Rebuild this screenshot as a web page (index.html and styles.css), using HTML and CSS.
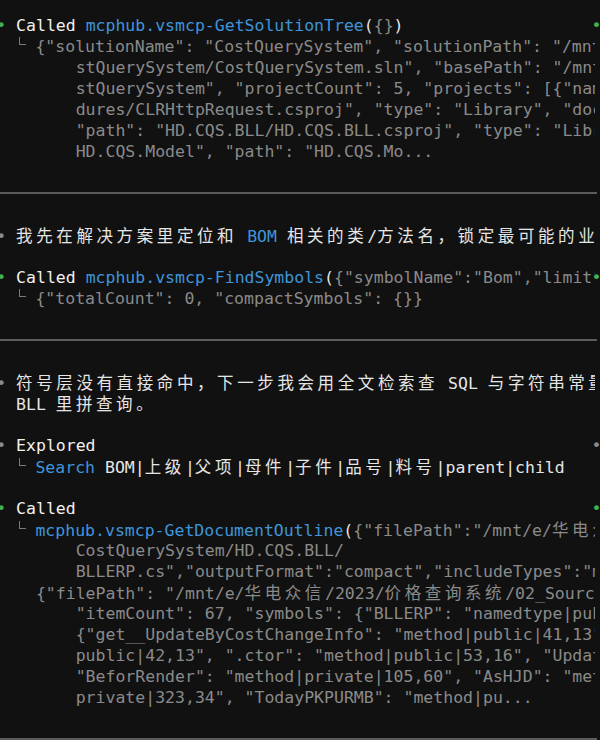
FILE: index.html
```html
<!DOCTYPE html>
<html lang="zh-CN">
<head>
<meta charset="utf-8">
<title>Terminal</title>
<link rel="stylesheet" href="styles.css">
</head>
<body>
<div class="term">
<div class="row"><div class="l"><span class="dot-g">•</span> <span class="hd">Called</span> <span class="b">mcphub.vsmcp-GetSolutionTree</span>(<span class="g">{}</span>)</div><span class="rdot dot-g">•</span></div>
<div class="l">  <span class="tr"></span><span class="g">{"solutionName": "CostQuerySystem", "solutionPath": "/mnt/e/data/Co</span></div>
<div class="l g">        stQuerySystem/CostQuerySystem.sln", "basePath": "/mnt/e/data/Co</div>
<div class="l g">        stQuerySystem", "projectCount": 5, "projects": [{"name": "CLRProce</div>
<div class="l g">        dures/CLRHttpRequest.csproj", "type": "Library", "documentCount"</div>
<div class="l g">        "path": "HD.CQS.BLL/HD.CQS.BLL.csproj", "type": "Library", "name":</div>
<div class="l g">        HD.CQS.Model", "path": "HD.CQS.Mo...</div>
<div class="l"></div>
<div class="sep"></div>
<div class="l"></div>
<div class="l"><span class="dot">•</span> <span class="cjk">我先在解决方案里定位和</span> <span class="b">BOM</span> <span class="cjk">相关的类</span>/<span class="cjk">方法名，锁定最可能的业务入口。</span></div>
<div class="l"></div>
<div class="row"><div class="l"><span class="dot-g">•</span> <span class="hd">Called</span> <span class="b">mcphub.vsmcp-FindSymbols</span>(<span class="g">{"symbolName":"Bom","limit":50}</span>)</div><span class="rdot dot-g">•</span></div>
<div class="l">  <span class="tr"></span><span class="g">{"totalCount": 0, "compactSymbols": {}}</span></div>
<div class="l"></div>
<div class="sep"></div>
<div class="l"></div>
<div class="l"><span class="dot">•</span> <span class="cjk">符号层没有直接命中，下一步我会用全文检索查</span> SQL <span class="cjk">与字符串常量，确认是否在</span></div>
<div class="l">  BLL <span class="cjk">里拼查询。</span></div>
<div class="l"></div>
<div class="row"><div class="l"><span class="dot">•</span> <span class="hd">Explored</span></div><span class="rdot dot">•</span></div>
<div class="l">  <span class="tr"></span><span class="b">Search</span> BOM|<span class="cjk">上级</span>|<span class="cjk">父项</span>|<span class="cjk">母件</span>|<span class="cjk">子件</span>|<span class="cjk">品号</span>|<span class="cjk">料号</span>|parent|child</div>
<div class="l"></div>
<div class="row"><div class="l"><span class="dot-g">•</span> <span class="hd">Called</span></div><span class="rdot dot-g">•</span></div>
<div class="l">  <span class="tr"></span><span class="b">mcphub.vsmcp-GetDocumentOutline</span>(<span class="g">{"filePath":"/mnt/e/<span class="cjk">华电众信</span>/2023/</span></div>
<div class="l g">        CostQuerySystem/HD.CQS.BLL/</div>
<div class="l g">        BLLERP.cs","outputFormat":"compact","includeTypes":"method"}<span class="w">)</span></div>
<div class="l g">    {"filePath": "/mnt/e/<span class="cjk">华电众信</span>/2023/<span class="cjk">价格查询系统</span>/02_Source/CostQuerySystem</div>
<div class="l g">        "itemCount": 67, "symbols": {"BLLERP": "namedtype|public|12,18",</div>
<div class="l g">        {"get__UpdateByCostChangeInfo": "method|public|41,13", "get__</div>
<div class="l g">        public|42,13", ".ctor": "method|public|53,16", "UpdateByCost</div>
<div class="l g">        "BeforRender": "method|private|105,60", "AsHJD": "method|</div>
<div class="l g">        private|323,34", "TodayPKPURMB": "method|pu...</div>
<div class="l"></div>
<div class="sep"></div>
</div>
</body>
</html>
```
FILE: styles.css
```css
html, body {
  margin: 0;
  padding: 0;
  background: #111111;
  overflow: hidden;
}

body {
  width: 600px;
  height: 740px;
}

.term {
  margin-left: -3.8px;
  padding-top: 14.5px;
  width: 620px;
  font-family: "DejaVu Sans Mono", "Noto Sans CJK SC", monospace;
  font-size: 16.5px;
  line-height: 21px;
  color: #e6e6e6;
}

.l {
  height: 21px;
  width: 598.3px;
  overflow: hidden;
  white-space: pre;
  flex: none;
}

.row {
  display: flex;
  height: 21px;
}

.rdot {
  width: 9.92px;
  margin-left: -3px;
  text-align: center;
  flex: none;
}

.cjk {
  font-family: "Noto Sans CJK SC", sans-serif;
  letter-spacing: 3.6px;
}

.g { color: #8a8a8a; }
.w { color: #e6e6e6; }
.b { color: #3f95da; }
.hd { color: #f2f2f2; }

.dot-g { color: #3fb34f; }
.dot { color: #8a8a8a; }

.tr {
  display: inline-block;
  width: 6px;
  height: 7px;
  border-left: 1.5px solid #7a7a7a;
  border-bottom: 1.5px solid #7a7a7a;
  margin-left: 3px;
  margin-right: 9.34px;
  vertical-align: 6.5px;
}

.sep {
  height: 21px;
  display: flex;
  align-items: center;
}

.sep::before {
  content: "";
  display: block;
  margin-left: 3.8px;
  width: 597px;
  height: 2px;
  background: #5c5c5c;
}
```
